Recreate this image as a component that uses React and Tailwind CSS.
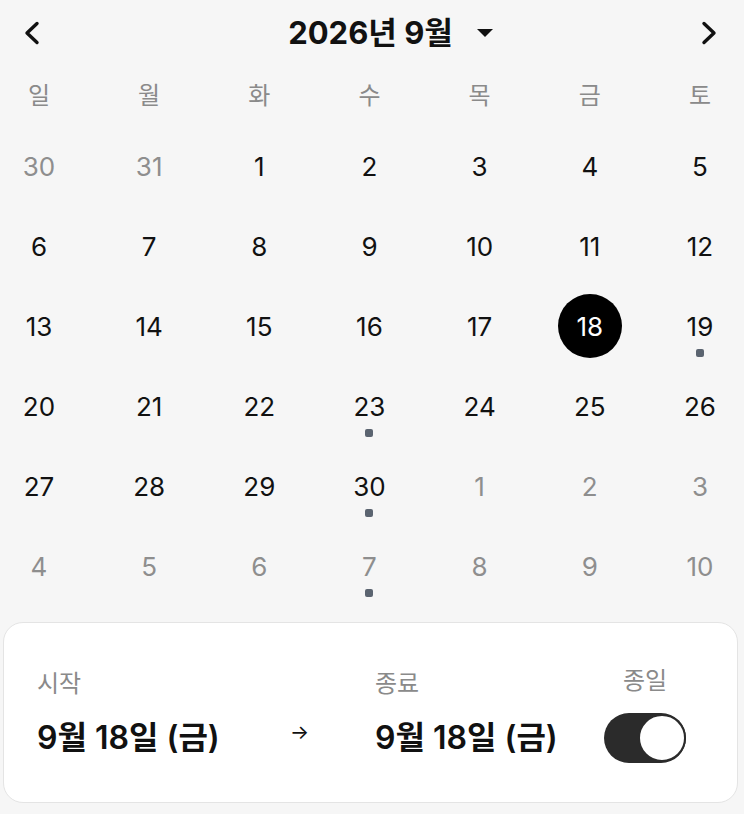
import React, { useState } from 'react';

const weekdays = ['일', '월', '화', '수', '목', '금', '토'];

// [day, inMonth, hasEvent]
const weeks = [
  [[30, false], [31, false], [1, true], [2, true], [3, true], [4, true], [5, true]],
  [[6, true], [7, true], [8, true], [9, true], [10, true], [11, true], [12, true]],
  [[13, true], [14, true], [15, true], [16, true], [17, true], [18, true], [19, true, true]],
  [[20, true], [21, true], [22, true], [23, true, true], [24, true], [25, true], [26, true]],
  [[27, true], [28, true], [29, true], [30, true, true], [1, false], [2, false], [3, false]],
  [[4, false], [5, false], [6, false], [7, false, true], [8, false], [9, false], [10, false]],
];

const Chevron = ({ dir }) => (
  <svg width="18" height="24" viewBox="0 0 18 24" fill="none">
    <polyline
      points={dir === 'left' ? '14,2.5 4,12 14,21.5' : '4,2.5 14,12 4,21.5'}
      stroke="#111"
      strokeWidth="3.4"
      strokeLinecap="round"
      strokeLinejoin="round"
    />
  </svg>
);

const App = () => {
  const [selected, setSelected] = useState(18);
  const [allDay, setAllDay] = useState(true);

  return (
    <div
      className="min-h-[814px] w-[744px] bg-[#f6f6f6] text-[#111] overflow-hidden"
      style={{ fontFamily: 'Inter, "Noto Sans CJK KR", sans-serif' }}
    >
      {/* header */}
      <div className="h-[66px] flex items-center justify-between pl-[23px] pr-[26px]">
        <button><Chevron dir="left" /></button>
        <div className="flex items-center pl-[40px]">
          <span className="text-[31px] font-bold">2026년 9월</span>
          <svg width="16" height="8" viewBox="0 0 16 8" className="ml-[24px]">
            <polygon points="0,0 16,0 8,8" fill="#111" />
          </svg>
        </div>
        <button><Chevron dir="right" /></button>
      </div>

      {/* weekdays */}
      <div className="h-[60px] flex items-center justify-between pl-[15px] pr-[20px]">
        {weekdays.map((w) => (
          <div key={w} className="w-[48px] text-center text-[24px] text-[#8a8a8a]">{w}</div>
        ))}
      </div>

      {/* dates */}
      {weeks.map((week, i) => (
        <div key={i} className="h-[80px] flex items-center justify-between pl-[15px] pr-[20px]">
          {week.map(([d, inMonth, hasEvent], j) => {
            const isSel = inMonth && i > 1 && i < 4 && d === selected;
            return (
              <div key={j} className="relative w-[48px] h-[80px] flex items-center justify-center">
                {isSel ? (
                  <div className="w-[64px] h-[64px] shrink-0 rounded-full bg-black text-white flex items-center justify-center text-[26px]">
                    {d}
                  </div>
                ) : (
                  <span
                    onClick={() => inMonth && setSelected(d)}
                    className={`text-[26px] ${inMonth ? 'text-[#111]' : 'text-[#8e8e8e]'}`}
                  >
                    {d}
                  </span>
                )}
                {hasEvent && (
                  <div className="absolute left-1/2 -translate-x-1/2 top-[63px] w-[8px] h-[8px] rounded-[2px] bg-[#5b6470]" />
                )}
              </div>
            );
          })}
        </div>
      ))}

      {/* range card */}
      <div className="mt-[16px] mx-[3px] w-[735px] bg-white border border-[#e4e4e4] rounded-[20px] pt-[45px] pb-[39px] pl-[33px] pr-[51px]">
        <div className="flex">
          <div className="w-[253px] flex flex-col">
            <div className="h-[32px] flex items-center text-[24px] text-[#8a8a8a]">시작</div>
            <div className="mt-[13px] h-[50px] flex items-center text-[32px] font-semibold">9월 18일 (금)</div>
          </div>
          <div className="w-[85px] flex flex-col">
            <div className="h-[32px]" />
            <div className="mt-[13px] h-[50px] flex items-center pb-[12px] text-[20px]">→</div>
          </div>
          <div className="flex-1 flex flex-col">
            <div className="h-[32px] flex items-center text-[24px] text-[#8a8a8a]">종료</div>
            <div className="mt-[13px] h-[50px] flex items-center text-[32px] font-semibold">9월 18일 (금)</div>
          </div>
          <div className="w-[82px] flex flex-col items-center">
            <div className="h-[32px] -mt-[3px] mb-[3px] flex items-center text-[24px] text-[#8a8a8a]">종일</div>
            <button
              onClick={() => setAllDay(!allDay)}
              className={`mt-[13px] w-[82px] h-[50px] rounded-full flex items-center ${allDay ? 'bg-[#2b2b2b] justify-end' : 'bg-[#d9d9d9] justify-start'}`}
            >
              <span className="w-[48px] h-[48px] rounded-full bg-white border-[2px] border-[#2b2b2b] block" />
            </button>
          </div>
        </div>
      </div>
    </div>
  );
};

export default App;
